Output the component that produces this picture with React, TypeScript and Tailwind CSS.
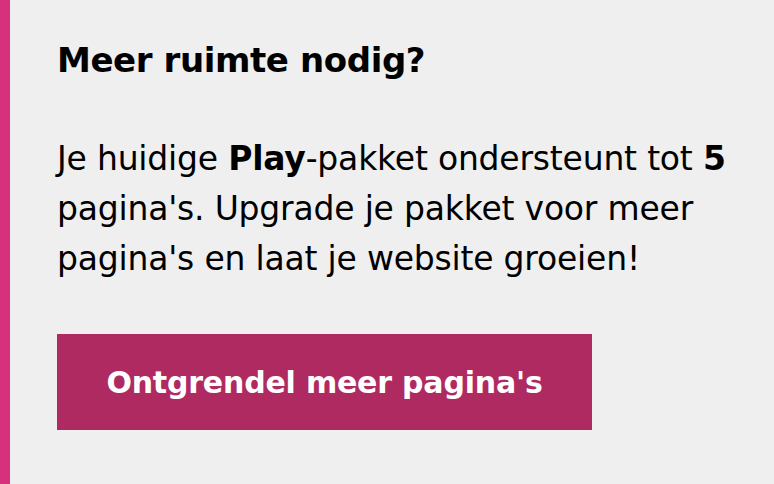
export default function App() {
  return (
    <main className="min-h-screen bg-[#efefef] font-['DejaVu_Sans','Open_Sans',sans-serif] text-black">
      <section className="flex h-[484px] w-[774px]">
        <div className="w-[10px] shrink-0 bg-[#d5317c]" />
        <div className="flex flex-col pl-[47px] pt-[34px]">
          <h2 className="text-[34px] font-bold leading-[52px] tracking-[-0.4px]">
            Meer ruimte nodig?
          </h2>
          <p className="mt-[48px] text-[33px] leading-[50px] tracking-[-0.2px]">
            Je huidige <strong className="font-bold">Play</strong>-pakket ondersteunt tot{" "}
            <strong className="font-bold">5</strong>
            <br />
            pagina's. Upgrade je pakket voor meer
            <br />
            pagina's en laat je website groeien!
          </p>
          <button className="mt-[50px] flex h-[96px] w-[535px] items-center justify-center bg-[#b02a62] text-[30px] font-bold tracking-[-0.2px] text-white">
            Ontgrendel meer pagina's
          </button>
        </div>
      </section>
    </main>
  );
}
